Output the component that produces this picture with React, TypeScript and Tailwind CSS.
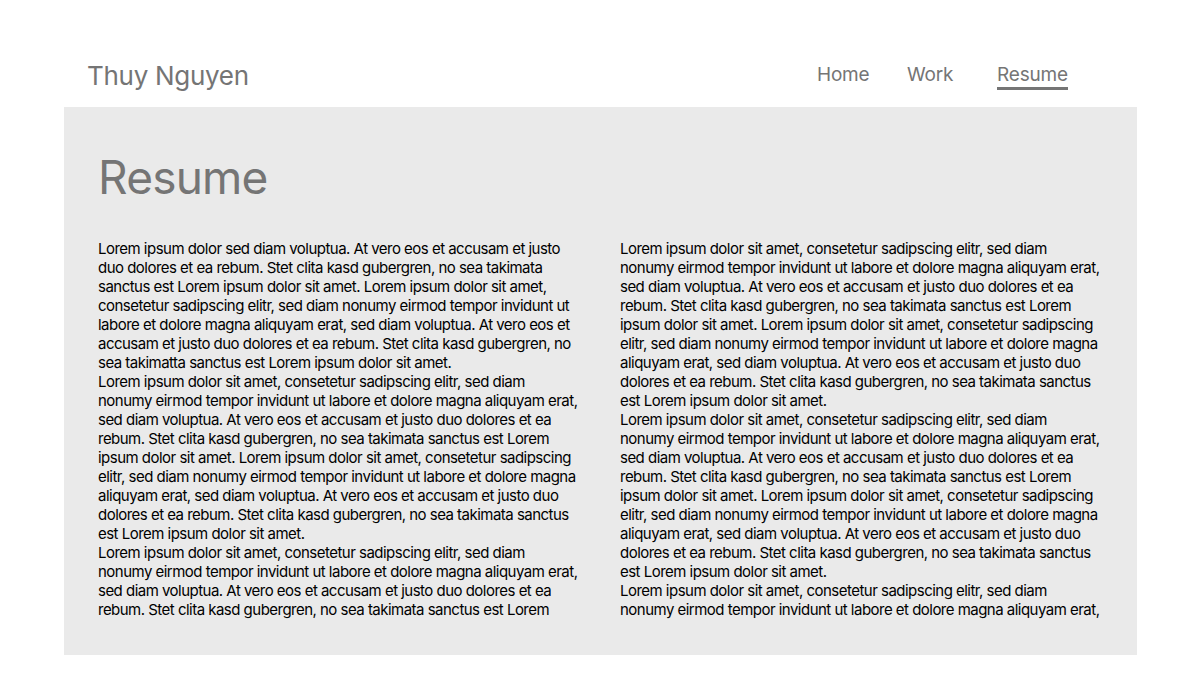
const loremLines = [
  "Lorem ipsum dolor sit amet, consetetur sadipscing elitr, sed diam",
  "nonumy eirmod tempor invidunt ut labore et dolore magna aliquyam erat,",
  "sed diam voluptua. At vero eos et accusam et justo duo dolores et ea",
  "rebum. Stet clita kasd gubergren, no sea takimata sanctus est Lorem",
  "ipsum dolor sit amet. Lorem ipsum dolor sit amet, consetetur sadipscing",
  "elitr, sed diam nonumy eirmod tempor invidunt ut labore et dolore magna",
  "aliquyam erat, sed diam voluptua. At vero eos et accusam et justo duo",
  "dolores et ea rebum. Stet clita kasd gubergren, no sea takimata sanctus",
  "est Lorem ipsum dolor sit amet.",
];

const introLines = [
  "Lorem ipsum dolor sed diam voluptua. At vero eos et accusam et justo",
  "duo dolores et ea rebum. Stet clita kasd gubergren, no sea takimata",
  "sanctus est Lorem ipsum dolor sit amet. Lorem ipsum dolor sit amet,",
  "consetetur sadipscing elitr, sed diam nonumy eirmod tempor invidunt ut",
  "labore et dolore magna aliquyam erat, sed diam voluptua. At vero eos et",
  "accusam et justo duo dolores et ea rebum. Stet clita kasd gubergren, no",
  "sea takimatta sanctus est Lorem ipsum dolor sit amet.",
];

const columns = [
  [introLines, loremLines, loremLines.slice(0, 4)],
  [loremLines, loremLines, loremLines.slice(0, 2)],
];

const navItems = ["Home", "Work", "Resume"];

export default function App() {
  return (
    <div className="min-h-[700px] bg-white pt-[60px] font-['Inter',sans-serif]">
      <header className="ml-[64px] flex h-[47px] w-[1073px] items-start justify-between pl-[23px] pr-[50px]">
        <h1 className="text-[26px] leading-[32px] tracking-[-0.3px] text-[#757575]">Thuy Nguyen</h1>
        <nav className="flex pt-[3px]">
          {navItems.map((item) => (
            <div key={item} className="w-[90px]">
              <a
                href="#"
                className={
                  item === "Resume"
                    ? "inline-block border-b-[3px] border-[#757575] text-[19px] leading-[24px] tracking-[-0.2px] text-[#757575]"
                    : "inline-block text-[19px] leading-[24px] tracking-[-0.2px] text-[#757575]"
                }
              >
                {item}
              </a>
            </div>
          ))}
        </nav>
      </header>

      <main className="ml-[64px] h-[548px] w-[1073px] bg-[#eaeaea] px-[34px] pt-[42px]">
        <h2 className="text-[46px] leading-[56px] tracking-[-0.8px] text-[#757575]">Resume</h2>
        <div className="mt-[34px] grid grid-cols-[481px_1fr] gap-x-[41px]">
          {columns.map((paras, i) => (
            <div key={i}>
              {paras.map((lines, j) => (
                <p key={j} className="whitespace-nowrap text-[15px] leading-[19px] tracking-[-0.52px] text-black">
                  {lines.map((line, k) => (
                    <span key={k} className="block">
                      {line}
                    </span>
                  ))}
                </p>
              ))}
            </div>
          ))}
        </div>
      </main>
    </div>
  );
}
